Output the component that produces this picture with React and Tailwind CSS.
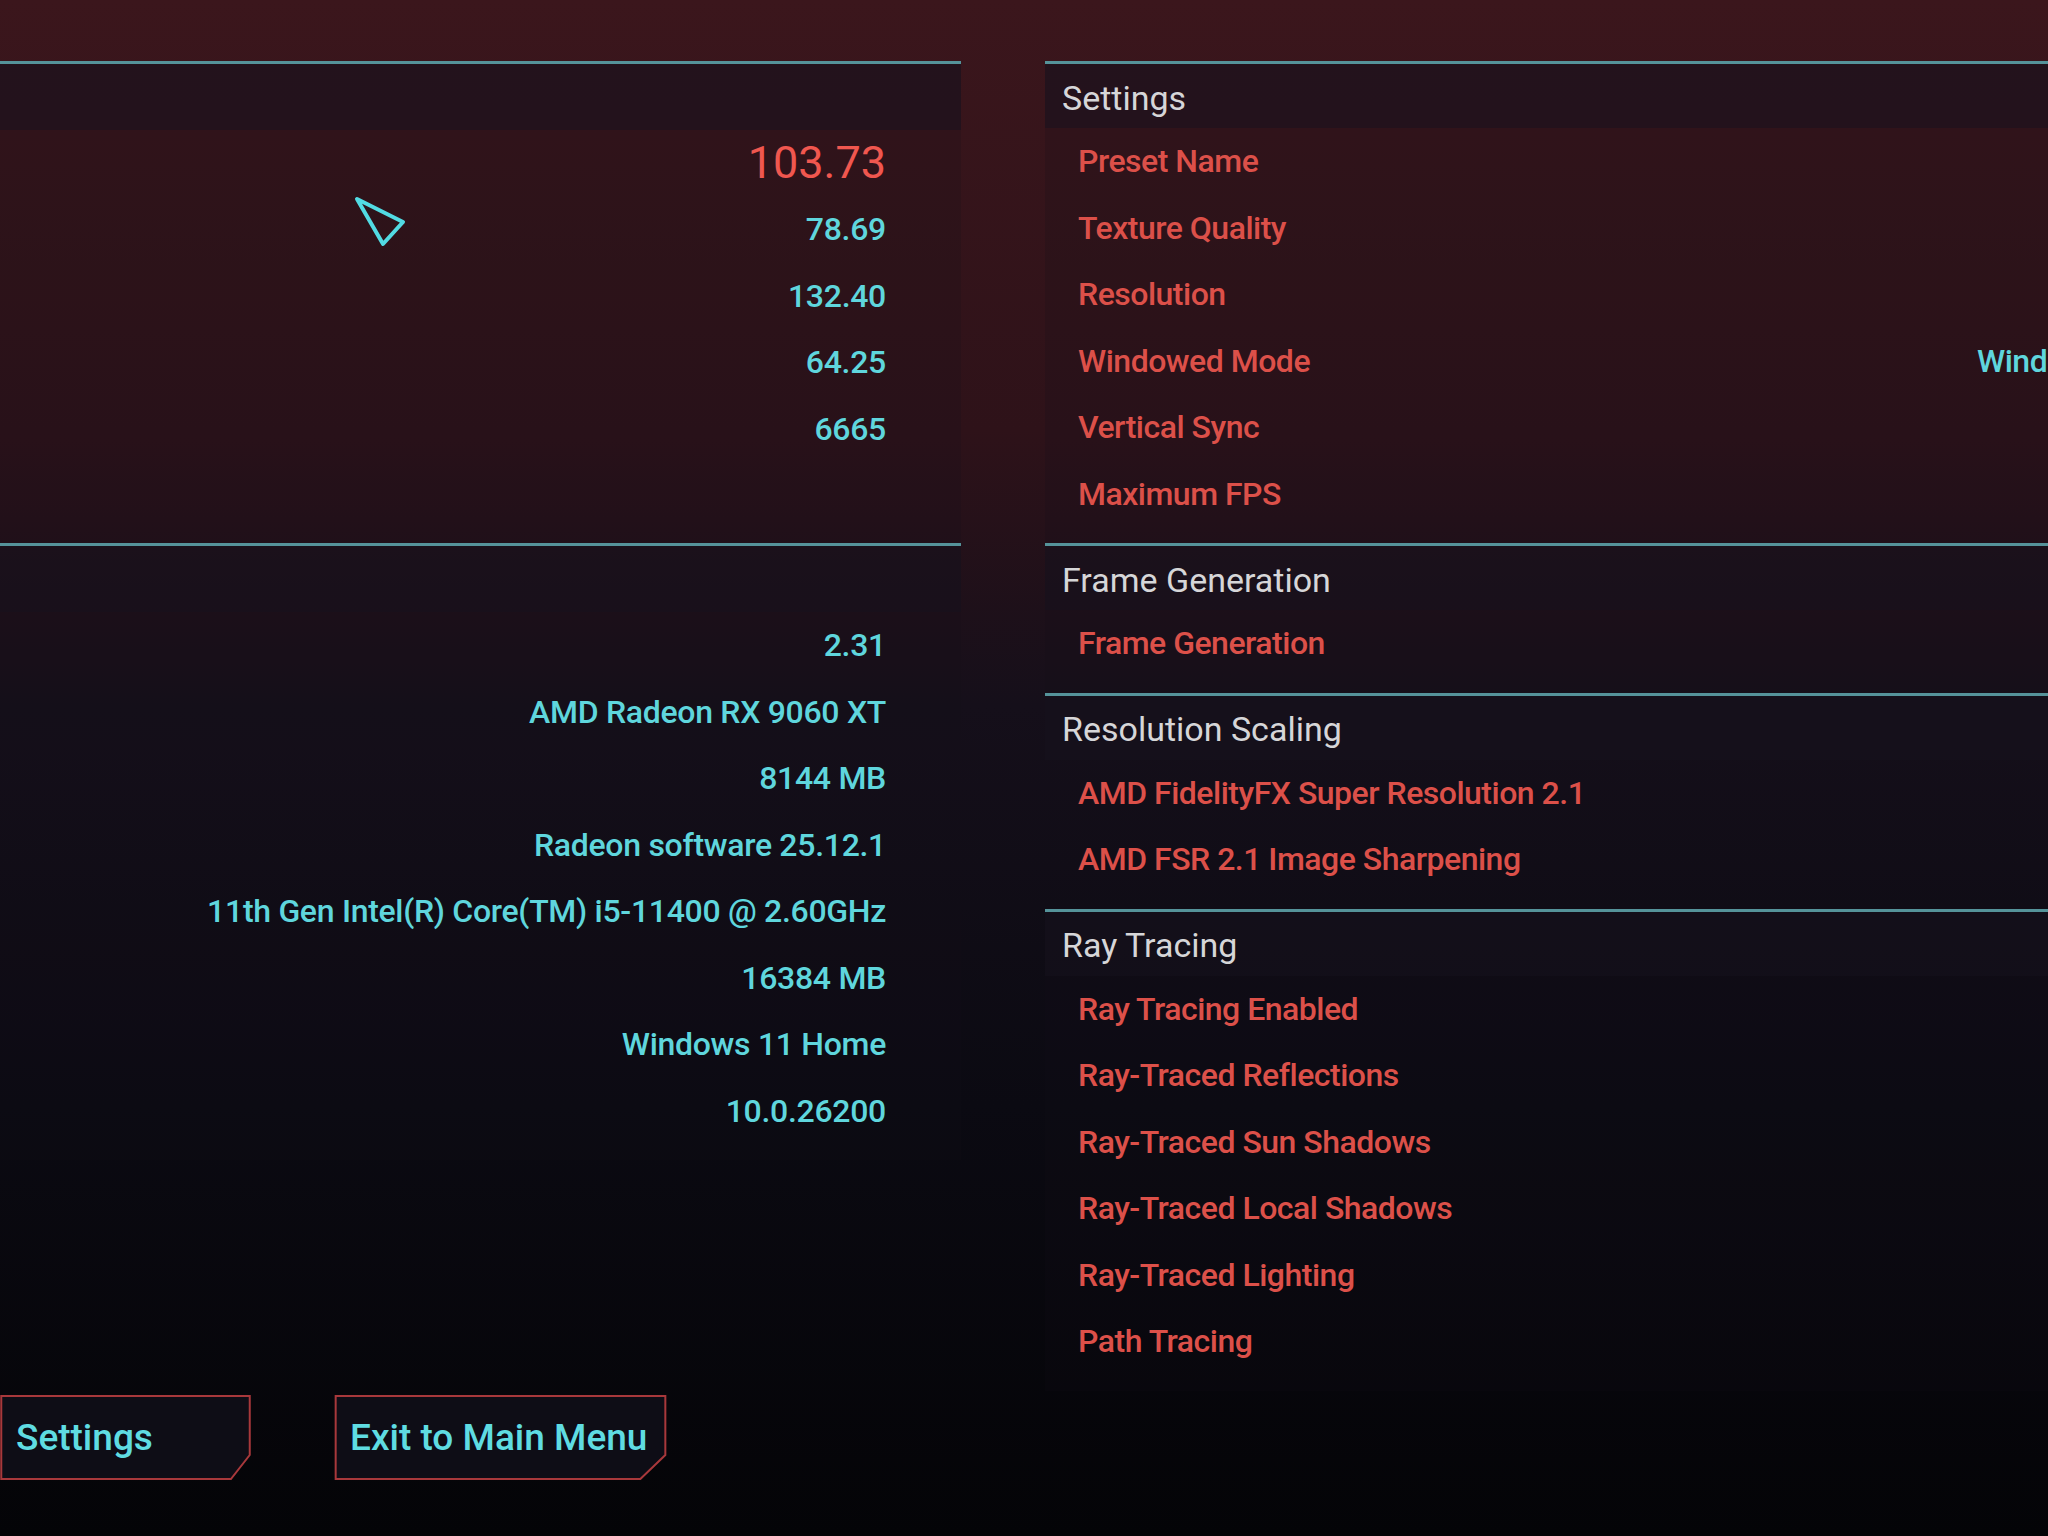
import React from 'react';

const FONT = { fontFamily: 'Roboto, "Liberation Sans", sans-serif' };

const perfRows = ['78.69', '132.40', '64.25', '6665'];

const systemRows = [
    '2.31',
    'AMD Radeon RX 9060 XT',
    '8144 MB',
    'Radeon software 25.12.1',
    '11th Gen Intel(R) Core(TM) i5-11400 @ 2.60GHz',
    '16384 MB',
    'Windows 11 Home',
    '10.0.26200',
];

const sections = [
    {
        title: 'Settings',
        items: ['Preset Name', 'Texture Quality', 'Resolution', 'Windowed Mode', 'Vertical Sync', 'Maximum FPS'],
    },
    { title: 'Frame Generation', items: ['Frame Generation'] },
    { title: 'Resolution Scaling', items: ['AMD FidelityFX Super Resolution 2.1', 'AMD FSR 2.1 Image Sharpening'] },
    {
        title: 'Ray Tracing',
        items: [
            'Ray Tracing Enabled',
            'Ray-Traced Reflections',
            'Ray-Traced Sun Shadows',
            'Ray-Traced Local Shadows',
            'Ray-Traced Lighting',
            'Path Tracing',
        ],
    },
];

const CutButton = ({ label, className }) => (
    <div className={`relative h-[85px] ${className}`}>
        <svg className="absolute inset-0 w-full h-full" preserveAspectRatio="none" viewBox="0 0 100 85">
            <polygon
                points="0.5,1 99.5,1 99.5,60 92,84 0.5,84"
                fill="#0e0d16"
                stroke="#a8383b"
                strokeWidth="2"
                vectorEffect="non-scaling-stroke"
            />
        </svg>
        <span className="relative flex h-full items-center whitespace-nowrap pl-[16px] text-[37px] font-medium text-[#5fdce2]">
            {label}
        </span>
    </div>
);

export default function App() {
    return (
        <div
            style={FONT}
            className="relative w-[2048px] h-[1536px] overflow-hidden bg-[linear-gradient(180deg,#3b161c_0%,#2e1219_28%,#150f1a_46%,#0b0a12_72%,#040407_100%)]"
        >
            <div className="flex h-full pt-[61px]">
                {/* left column: benchmark results + system info */}
                <div className="flex w-[961px] flex-col pb-[56px]">
                    <div className="h-[482px] border-t-[3px] border-[#55939a] bg-[#140f19]/20">
                        <div className="h-[66px] bg-[#16121e]/50"></div>
                        <div className="flex h-[66px] items-center justify-end pr-[75px] text-[45px] text-[#f0574f]">
                            103.73
                        </div>
                        {perfRows.map((v) => (
                            <div key={v} className="flex h-[66.5px] items-center justify-end pr-[75px] text-[32px] font-medium tracking-[-0.3px] text-[#5fd6dd]">
                                {v}
                            </div>
                        ))}
                    </div>
                    <div className="border-t-[3px] border-[#55939a] bg-[#140f19]/20 pb-4">
                        <div className="h-[66px] bg-[#16121e]/50"></div>
                        {systemRows.map((v) => (
                            <div key={v} className="flex h-[66.5px] items-center justify-end pr-[75px] text-[32px] font-medium tracking-[-0.3px] text-[#5fd6dd]">
                                {v}
                            </div>
                        ))}
                    </div>
                    <div className="mt-auto flex gap-[83px]">
                        <CutButton label="Settings" className="w-[251px]" />
                        <CutButton label="Exit to Main Menu" className="w-[333px]" />
                    </div>
                </div>

                {/* right column: settings list */}
                <div className="ml-[84px] flex-1 overflow-hidden">
                    {sections.map((s) => (
                        <div key={s.title} className="border-t-[3px] border-[#55939a] bg-[#140f19]/20 pb-4">
                            <div className="flex h-[64px] items-center bg-[#16121e]/50 pl-[17px] pt-1 text-[34px] text-[#d6d6d8]">
                                {s.title}
                            </div>
                            {s.items.map((it) => (
                                <div key={it} className="flex h-[66.5px] items-center whitespace-nowrap pl-[33px] text-[32px] font-medium tracking-[-0.5px] text-[#dc5049]">
                                    <span className="w-[899px] shrink-0">{it}</span>
                                    {it === 'Windowed Mode' && <span className="text-[#5fd6dd]">Windowed</span>}
                                </div>
                            ))}
                        </div>
                    ))}
                </div>
            </div>

            {/* mouse cursor */}
            <svg className="absolute left-[348px] top-[190px] h-[64px] w-[64px]" viewBox="0 0 64 64">
                <polygon
                    points="9,9 55,32 35,54"
                    fill="none"
                    stroke="#52dbe3"
                    strokeWidth="4"
                    strokeLinejoin="round"
                />
            </svg>
        </div>
    );
}
